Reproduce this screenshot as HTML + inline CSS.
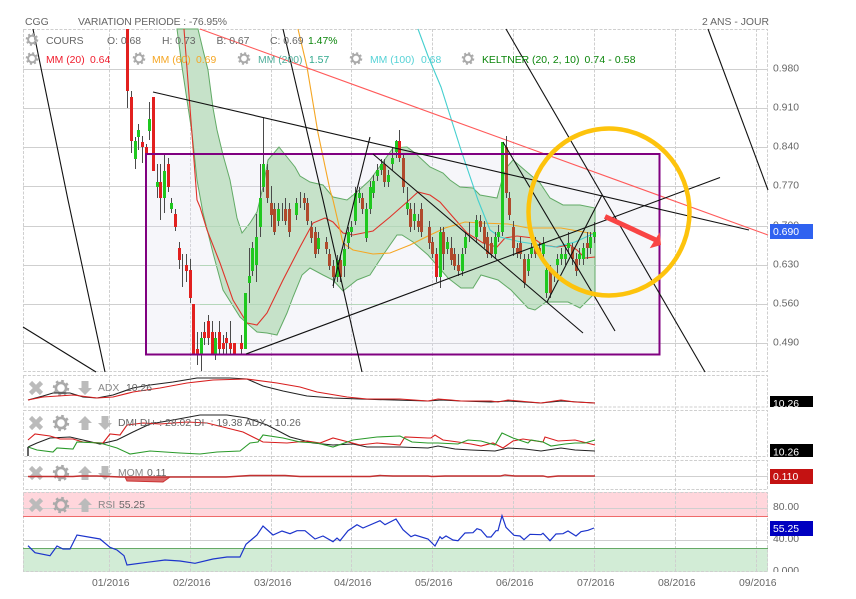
<!DOCTYPE html>
<html><head><meta charset="utf-8"><title>CGG</title>
<style>html,body{margin:0;padding:0;background:#fff;width:856px;height:599px;overflow:hidden}svg{display:block}text{font-family:"Liberation Sans",Arial,sans-serif;font-size:10.4px;fill:#666}</style></head><body>
<svg width="856" height="599" viewBox="0 0 856 599" xmlns="http://www.w3.org/2000/svg">
<defs>
<g id="gear"><circle r="3.9" fill="none" stroke="#aaa" stroke-width="2"/><circle r="5.3" fill="none" stroke="#aaa" stroke-width="2" stroke-dasharray="2 2.16"/></g>
<path id="x" d="M-5.5 -5.5L5.5 5.5M5.5 -5.5L-5.5 5.5" stroke="#bbb" stroke-width="4.5" fill="none"/>
<path id="up" d="M0 -7L7 0H3.5V7H-3.5V0H-7Z" fill="#bbb"/>
<path id="dn" d="M0 7L7 0H3.5V-7H-3.5V0H-7Z" fill="#bbb"/>
<clipPath id="c1"><rect x="770" y="396" width="43" height="11"/></clipPath>
<clipPath id="c2"><rect x="770" y="560" width="43" height="12"/></clipPath>
</defs>

<!-- RSI zones -->
<rect x="23" y="492" width="745" height="24" fill="#ffd6dc"/>
<rect x="23" y="548" width="745" height="24" fill="#d2ecd6"/>

<!-- grid -->
<g fill="none" stroke="#cfcfcf" stroke-width="1">
<path d="M23 69.5H768M23 108.5H768M23 147.5H768M23 186.5H768M23 226.5H768M23 265.5H768M23 304.5H768M23 343.5H768M23 476.5H768M23 508.5H768M23 540.5H768"/>
<g stroke-dasharray="3 1.5">
<path d="M109.5 29V372M190.5 29V372M271.5 29V372M351.5 29V372M432.5 29V372M513.5 29V372M594.5 29V372M675.5 29V372M756.5 29V372"/>
<path d="M109.5 375V572M190.5 375V572M271.5 375V572M351.5 375V572M432.5 375V572M513.5 375V572M594.5 375V572M675.5 375V572M756.5 375V572"/>
<path d="M23.5 29.5H767.5V371.5H23.5ZM23.5 375.5H767.5V407H23.5ZM23.5 410.5H767.5V456.5H23.5ZM23.5 460.5H767.5V489.5H23.5ZM23.5 492.5H767.5V571.5H23.5Z"/>
</g></g>

<!-- purple box fill -->
<rect x="146" y="154" width="514" height="201" fill="#f6f6fa"/>
<g fill="none" stroke="#d2d2d8"><path d="M146 186.5H660M146 226.5H660M146 265.5H660M146 304.5H660M146 343.5H660"/><path stroke-dasharray="3 1.5" d="M190.5 154V355M271.5 154V355M351.5 154V355M432.5 154V355M513.5 154V355M594.5 154V355"/></g>

<!-- keltner band -->
<path d="M198 29L203 50L208 70L213 108L217 130L223 155L230 180L237 218L242 233L250 223L257 212L263 187L268 160L279 147L287 157L295 167L300 176L310 182L323 185L333 197L347 200L357 192L370 180L383 162L393 148L407 147L415 153L430 167L443 173L450 180L460 187L473 188L480 195L497 198L502 180L507 167L513 160L527 172L540 183L550 198L563 205L580 205L595 208V293L580 308L568 302L546 302L535 310L528 308L511 290L498 280L481 275L473 288L461 288L448 278L428 255L413 242L402 235L397 235L383 255L370 275L357 280L343 291L333 280L323 275L310 268L302 275L293 297L287 313L277 335L267 333L257 332L240 317L223 290L213 253L203 213L197 180L192 133L187 100L182 67L177 29Z" fill="#c6e2c9" stroke="#62aa66" stroke-width="1"/>
<g fill="none" stroke="#b5d6ba"><path d="M200 226.5H595M200 265.5H595M200 304.5H595"/></g>

<!-- moving averages -->
<g fill="none" stroke-width="1.1">
<path d="M184 29L197 200L200 207L207 230L220 263L233 300L247 323L257 325L267 313L283 280L300 247L313 223L325 218L333 222L343 233L353 235L373 231L390 217L407 202L418 192L430 195L440 202L453 217L467 233L483 243L497 247L505 238L517 236L533 238L543 245L557 247L570 245L577 250L585 258L595 257" stroke="#e0332a"/>
<path d="M298 29L307 67L318 133L330 190L333 200L343 243L353 250L373 254L390 253L410 245L428 236L445 228L465 222L481 223L508 224L528 228L561 228L595 234" stroke="#f5a623"/>
<path d="M418 29L428 56L441 87L461 150L478 200L490 230L500 237L521 242L555 247L575 242L595 233" stroke="#45cfcf"/>
<path d="M200 29L768 235" stroke="#ff5a5a"/>
</g>

<!-- candles wicks -->
<path fill="none" stroke="#4a4a4a" stroke-width="1" d="M127.5 29V108M131.5 91V153M135.5 137V169M138.5 124V150M142.5 136V163M146.5 144V170M149.5 102V140M153.5 97V171M157.5 164V198M160.5 164V220M164.5 155V213M168.5 158V192M171.5 198V213M175.5 209V231M179.5 242V269M182.5 254V287M186.5 254V282M190.5 259V303M197.5 332V365M201.5 332V371M204.5 322V345M208.5 315V345M212.5 321V354M215.5 332V360M219.5 321V354M223.5 335V354M226.5 332V354M230.5 321V354M241.5 335V354M249.5 248V303M252.5 242V276M256.5 214V282M260.5 164V237M263.5 118V192M267.5 164V203M271.5 186V227M274.5 203V235M278.5 203V226M282.5 203V221M285.5 198V225M289.5 203V237M296.5 198V220M300.5 192V208M304.5 193V210M307.5 198V225M311.5 221V243M315.5 227V258M318.5 232V254M326.5 237V254M329.5 249V270M333.5 260V288M337.5 255V282M340.5 255V282M344.5 243V277M348.5 227V249M351.5 221V237M355.5 187V225M359.5 187V203M362.5 193V214M366.5 203V242M370.5 181V214M373.5 175V198M377.5 164V181M381.5 159V175M384.5 159V187M388.5 170V187M392.5 148V170M396.5 140V158M399.5 130V162M403.5 153V193M407.5 187V215M410.5 203V232M414.5 203V230M418.5 214V232M421.5 203V237M429.5 221V249M432.5 237V258M436.5 248V282M440.5 227V288M443.5 227V270M447.5 237V254M451.5 237V265M454.5 248V270M458.5 254V276M462.5 248V276M465.5 232V254M469.5 222V242M476.5 215V243M480.5 215V232M484.5 221V248M487.5 232V258M491.5 237V258M495.5 232V259M498.5 225V242M502.5 142V236M506.5 136V198M509.5 192V220M513.5 221V256M517.5 243V258M520.5 237V259M524.5 254V288M528.5 254V276M531.5 243V258M535.5 237V258M539.5 243V258M543.5 237V258M546.5 265V298M550.5 265V298M554.5 276V282M557.5 254V276M561.5 248V265M565.5 248V265M568.5 232V254M572.5 243V265M576.5 253V276M579.5 248V265M583.5 243V265M587.5 232V259M590.5 232V254M594.5 222V243"/>
<!-- bodies -->
<path fill="none" stroke="#1fc81f" stroke-width="3" d="M135.5 141V159M138.5 130V137M149.5 119V131M157.5 182V187M164.5 171V198M171.5 203V209M201.5 338V354M215.5 338V354M245.5 293V349M249.5 276V283M252.5 248V271M256.5 237V265M260.5 198V227M263.5 164V187M278.5 209V221M296.5 203V215M318.5 238V249M337.5 260V277M344.5 249V266M348.5 232V243M351.5 227V232M355.5 193V221M359.5 193V198M366.5 209V238M370.5 187V209M373.5 181V193M377.5 170V176M381.5 164V170M388.5 175V182M392.5 158V164M396.5 141V152M407.5 203V209M414.5 214V221M440.5 232V277M447.5 242V249M462.5 254V271M465.5 237V248M476.5 220V237M495.5 237V254M498.5 232V237M502.5 142V232M528.5 259V271M531.5 248V254M543.5 243V254M546.5 270V293M557.5 259V265M561.5 254V259M565.5 254V259M568.5 243V248M579.5 254V259M583.5 248V259M590.5 237V248M594.5 232V237"/>
<path fill="none" stroke="#e2201f" stroke-width="3" d="M127.5 29V91M131.5 97V141M142.5 142V147M146.5 147V154M153.5 97V171M160.5 182V198M168.5 164V187M175.5 214V227M179.5 248V260M186.5 265V271M190.5 270V298M193.5 304V354M197.5 349V354M204.5 332V338M208.5 321V338M212.5 332V354M219.5 332V349M223.5 343V349M226.5 338V343M230.5 343V349M234.5 343V354M241.5 343V349M399.5 141V158M436.5 254V277"/>
<path fill="none" stroke="#b04a2c" stroke-width="3" d="M267.5 170V198M271.5 203V215M274.5 209V232M285.5 209V221M289.5 209V232M304.5 198V203M307.5 203V221M311.5 227V238M315.5 232V254M326.5 242V249M329.5 254V266M333.5 266V277M340.5 260V277M362.5 198V209M384.5 164V182M403.5 158V187M410.5 209V227M418.5 221V227M421.5 209V232M429.5 227V243M432.5 242V254M443.5 232V254M451.5 248V260M454.5 254V266M458.5 265V271M480.5 221V227M484.5 227V243M487.5 237V254M491.5 243V254M506.5 147V193M509.5 198V215M513.5 227V248M517.5 248V254M520.5 243V254M524.5 259V283M535.5 248V254M539.5 248V254M550.5 270V293M572.5 247V259M576.5 259V271M587.5 243V248"/>

<!-- purple rect -->
<rect x="146" y="154" width="513.5" height="200.5" fill="none" stroke="#800080" stroke-width="2"/>

<!-- trend lines -->
<g fill="none" stroke="#111" stroke-width="1.1">
<path d="M33 29L68 200L105 372"/>
<path d="M23 327L96 372"/>
<path d="M153 92L749 230"/>
<path d="M283 29L323 200L362 372"/>
<path d="M333 286L370 137"/>
<path d="M373 154L583 333"/>
<path d="M246 354L720 177.500"/>
<path d="M506 29L705 372"/>
<path d="M708 29L768 190"/>
<path d="M503 142L615 331"/>
<path d="M547 302L602 195"/>
</g>

<!-- gold circle -->
<ellipse cx="609" cy="212" rx="80.500" ry="83.500" fill="none" stroke="#fdc30c" stroke-width="4.500"/>
<!-- red arrow -->
<path d="M605 216.500L657 240.500" stroke="#f94444" stroke-width="5" fill="none"/>
<path d="M659.700 232.300L649.700 248.300L661 245Z" fill="#f94444"/>

<!-- header -->
<text x="25" y="25">CGG</text>
<text x="78" y="25" textLength="149" lengthAdjust="spacing">VARIATION PERIODE : -76.95%</text>
<text x="702" y="25">2 ANS - JOUR</text>

<!-- legend -->
<use href="#gear" x="32" y="39.500"/><use href="#gear" x="32" y="58.500"/><use href="#gear" x="139" y="58.500"/><use href="#gear" x="244" y="58.500"/><use href="#gear" x="356" y="58.500"/><use href="#gear" x="468" y="58.500"/>
<text x="46" y="44">COURS</text>
<text x="107" y="44">O: 0.68</text>
<text x="162" y="44">H: 0.73</text>
<text x="216.500" y="44">B: 0.67</text>
<text x="270" y="44">C: 0.69</text>
<text x="308" y="44" style="fill:#0a850a">1.47%</text>
<text x="46" y="63" style="fill:#f01c2c">MM (20)</text><text x="90" y="63" style="fill:#f01c2c">0.64</text>
<text x="152" y="63" style="fill:#f5a623">MM (60)</text><text x="196" y="63" style="fill:#f5a623">0.69</text>
<text x="258" y="63" style="fill:#4fae9a">MM (200)</text><text x="309" y="63" style="fill:#2fa88c">1.57</text>
<text x="370" y="63" style="fill:#55d2d6">MM (100)</text><text x="421" y="63" style="fill:#55d2d6">0.68</text>
<text x="482" y="63" style="fill:#0a850a">KELTNER (20, 2, 10)</text><text x="584.500" y="63" style="fill:#0a850a" textLength="51">0.74 - 0.58</text>

<!-- y axis -->
<text x="773" y="71.500">0.980</text><text x="773" y="110.500">0.910</text><text x="773" y="149.500">0.840</text><text x="773" y="188.500">0.770</text><text x="773" y="228.500">0.700</text><text x="773" y="267.500">0.630</text><text x="773" y="306.500">0.560</text><text x="773" y="345.500">0.490</text>
<rect x="770" y="224" width="43" height="15" fill="#2f62f0"/><text x="773" y="235" style="fill:#fff">0.690</text>

<!-- panel icons -->
<use href="#x" x="36" y="388"/><g transform="translate(61 388) scale(1.3)"><use href="#gear"/></g><use href="#dn" x="85" y="388"/>
<use href="#x" x="36" y="423"/><g transform="translate(61 423) scale(1.3)"><use href="#gear"/></g><use href="#up" x="85" y="423"/><use href="#dn" x="105" y="423"/>
<use href="#x" x="36" y="473"/><g transform="translate(61 473) scale(1.3)"><use href="#gear"/></g><use href="#up" x="85" y="473"/><use href="#dn" x="105" y="473"/>
<use href="#x" x="36" y="505"/><g transform="translate(61 505) scale(1.3)"><use href="#gear"/></g><use href="#up" x="85" y="505"/>

<!-- ADX -->
<path fill="none" stroke="#222" stroke-width="1.1" d="M28 400L43 396L53 393L70 393L83 397L97 398L113 395L133 388L150 385L173 382L197 378L217 378L230 378L247 379L263 386L283 391L307 396L333 398L360 399L428 401L441 400L461 401L491 402L508 401L541 403L561 401L595 403"/>
<path fill="none" stroke="#d81e1e" stroke-width="1.100" d="M28 400L43 397L73 395L97 398L113 397L133 392L160 388L187 383L213 380L247 379L277 383L300 387L317 392L347 397L367 399L400 399L428 401L438 399L451 400L461 401L491 401L498 402L508 400L541 403L561 400L575 402L595 403"/>
<text x="98" y="391" style="fill:#888">ADX</text><text x="126" y="391" style="fill:#666">10.26</text>
<!-- DMI -->
<path fill="none" stroke="#222" stroke-width="1.100" d="M28 447L37 443L50 438L70 437L83 440L100 444L117 440L133 432L150 424L173 420L200 415L227 415L247 418L267 425L290 437L313 443L333 445L353 444L367 447L400 447L428 448L438 446L455 449L471 450L495 451L508 448L525 449L541 451L561 448L575 450L595 451"/>
<path fill="none" stroke="#d81e1e" stroke-width="1.100" d="M28 440L35 434L50 436L60 439L73 439L83 442L103 443L110 434L120 435L127 425L143 423L160 424L187 422L207 423L227 428L243 432L263 442L287 443L307 441L320 443L333 438L360 445L377 443L400 445L405 437L428 438L431 438L435 435L443 440L458 442L471 444L481 446L493 443L503 448L513 441L523 439L543 442L545 437L558 441L575 440L595 445"/>
<path fill="none" stroke="#2a9a2a" stroke-width="1.100" d="M28 447L37 450L53 452L57 448L73 449L77 442L100 443L117 448L130 454L150 451L180 453L200 454L217 452L240 451L250 443L258 442L263 435L283 438L300 442L317 443L333 447L353 440L377 437L400 436L412 442L428 443L438 443L458 444L468 440L481 441L495 445L502 433L513 438L528 443L531 440L543 442L551 446L565 444L575 443L585 443L595 440"/>
<path d="M28 447V456" stroke="#333" stroke-width="1.500"/>
<text x="118" y="426" style="fill:#666">DMI DI+ : 28.02 DI- : 19.38 ADX : 10.26</text>
<!-- MOM -->
<path d="M125 477L127 481L163 482L170 477Z" fill="#d96a6a" stroke="#c33" stroke-width="1"/>
<path fill="none" stroke="#c43030" stroke-width="1.400" d="M28 476.500H73L80 476L97 476L120 477L226 477L250 475.500H285L300 476.500H370L380 475.500L393 476L428 476L432 476.500L445 476H500L505 475L515 476H543L548 477L558 476H595"/>
<text x="118" y="476" style="fill:#888">MOM</text><text x="147" y="476" style="fill:#666">0.11</text>
<!-- RSI -->
<path d="M23 516.500H768" stroke="#ef6a6a" stroke-width="1"/>
<path d="M23 548.500H768" stroke="#66aa66" stroke-width="1"/>
<path fill="none" stroke="#1c34cc" stroke-width="1.200" d="M28 545.700L35 552.700L50 555.700L57 546L63 549L70 549L77 535L100 539L110 547.300L117 550L124 555.700L127 565L147 562.300L165 560L180 561L195 563.300L213 559L227 557L240 557L246 544.300L257 535L263 526L273 535L282 531L290 533.700L297 530.700L305 530.700L315 539L323 536L333 541.700L337 538L340 540.700L348 530.700L357 524.700L363 528L380 520.700L385 524.700L396 519L403 529.700L411 536.700L415 535L428 539L435 546L440 536.700L442 538.700L446 536L453 540L458 540.700L465 533L473 532.700L477 528.700L481 530L487 537L491 537L496 530.700L498 530.700L502 515.700L506 527.300L514 535.300L520 536L524 539.700L530 534.300L541 534.700L543 533.300L550 540.700L556 534L563 533.700L568 531L576 536L581 531.700L588 530.300L594 528"/>
<text x="98" y="508" style="fill:#888">RSI</text><text x="119" y="508" style="fill:#666">55.25</text>
<text x="773" y="510">80.00</text><text x="773" y="542">40.00</text>
<text x="773" y="574" clip-path="url(#c2)">0.000</text>

<!-- value tags -->
<rect x="770" y="396" width="43" height="11" fill="#000"/><text x="773" y="407" style="fill:#fff" clip-path="url(#c1)">10.26</text>
<rect x="770" y="444" width="43" height="13" fill="#000"/><text x="773" y="455.500" style="fill:#fff">10.26</text>
<rect x="770" y="469" width="43" height="15" fill="#c41212"/><text x="773" y="480" style="fill:#fff">0.110</text>
<rect x="770" y="521" width="43" height="15" fill="#0000c0"/><text x="773" y="532" style="fill:#fff">55.25</text>

<!-- x axis -->
<text x="92" y="586">01/2016</text><text x="173" y="586">02/2016</text><text x="254" y="586">03/2016</text><text x="334" y="586">04/2016</text><text x="415" y="586">05/2016</text><text x="496" y="586">06/2016</text><text x="577" y="586">07/2016</text><text x="658" y="586">08/2016</text><text x="739" y="586">09/2016</text>
</svg>
</body></html>
